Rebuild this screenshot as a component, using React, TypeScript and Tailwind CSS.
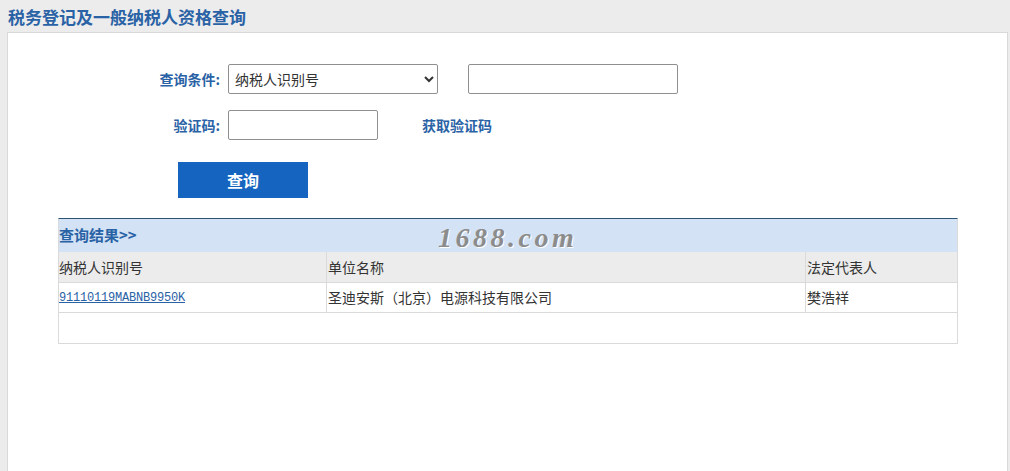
import React from "react";

export default function App() {
  const cjk = { fontFamily: '"Noto Sans CJK SC", "Microsoft YaHei", sans-serif' } as React.CSSProperties;
  return (
    <div className="w-full h-[471px] bg-[#ececec] flex flex-col overflow-hidden" style={cjk}>
      <div className="h-[32px] pl-[8px] flex items-center">
        <span className="text-[17px] font-bold text-[#2a62a6] leading-none">税务登记及一般纳税人资格查询</span>
      </div>
      <div className="flex-1 ml-[7px] mr-[2px] bg-white border border-[#d9d9d9] border-b-0 flex flex-col">
        {/* row 1 */}
        <div className="mt-[31px] flex items-center pl-[132px]">
          <div className="w-[88px] pr-[8px] text-right text-[14px] font-bold text-[#2a62a6] whitespace-nowrap">查询条件:</div>
          <select className="w-[210px] h-[30px] border border-[#8f8f8f] rounded-[2px] text-[14px] text-[#333] px-[2px] bg-white">
            <option>纳税人识别号</option>
          </select>
          <input className="ml-[30px] w-[210px] h-[30px] border border-[#8f8f8f] rounded-[2px] bg-white" />
        </div>
        {/* row 2 */}
        <div className="mt-[16px] flex items-center pl-[132px]">
          <div className="w-[88px] pr-[8px] text-right text-[14px] font-bold text-[#2a62a6]">验证码:</div>
          <input className="w-[150px] h-[30px] border border-[#8f8f8f] rounded-[2px] bg-white" />
          <span className="ml-[44px] text-[14px] font-bold text-[#2a62a6]">获取验证码</span>
        </div>
        {/* button */}
        <div className="mt-[22px] pl-[170px]">
          <button className="w-[130px] h-[36px] bg-[#1565c0] text-white text-[16px] font-bold flex items-center justify-center">查询</button>
        </div>
        {/* table */}
        <div className="mt-[20px] ml-[50px] w-[900px] border-t border-t-[#2f5372] border-x border-[#dadada] border-b relative">
          <div className="h-[33px] bg-[#d3e2f4] flex items-center">
            <span className="text-[15px] font-bold text-[#2a62a6]">查询结果&gt;&gt;</span>
          </div>
          <div
            className="absolute left-[379px] top-[3px] text-[28px] font-bold italic text-[#8c8c8c] tracking-[3.5px] leading-[32px]"
            style={{ fontFamily: '"Liberation Serif", serif', textShadow: "1px 1px 0 #ffffff" }}
          >
            1688.com
          </div>
          <div className="grid grid-cols-[268px_479px_151px] h-[31px] bg-[#ececec] text-[14px] text-[#333] border-b border-[#dadada]">
            <div className="flex items-center border-r border-[#dadada]">纳税人识别号</div>
            <div className="flex items-center pl-[1px] border-r border-[#dadada]">单位名称</div>
            <div className="flex items-center pl-[1px]">法定代表人</div>
          </div>
          <div className="grid grid-cols-[268px_479px_151px] h-[30px] bg-white text-[14px] text-[#333] border-b border-[#dadada]">
            <div className="flex items-center border-r border-[#dadada]">
              <span className="text-[12px] underline text-[#2a62a6] tracking-[-0.2px]" style={{ fontFamily: '"Liberation Mono", monospace' }}>91110119MABNB9950K</span>
            </div>
            <div className="flex items-center pl-[1px] border-r border-[#dadada]">圣迪安斯（北京）电源科技有限公司</div>
            <div className="flex items-center pl-[1px]">樊浩祥</div>
          </div>
          <div className="h-[30px] bg-white"></div>
        </div>
      </div>
    </div>
  );
}
